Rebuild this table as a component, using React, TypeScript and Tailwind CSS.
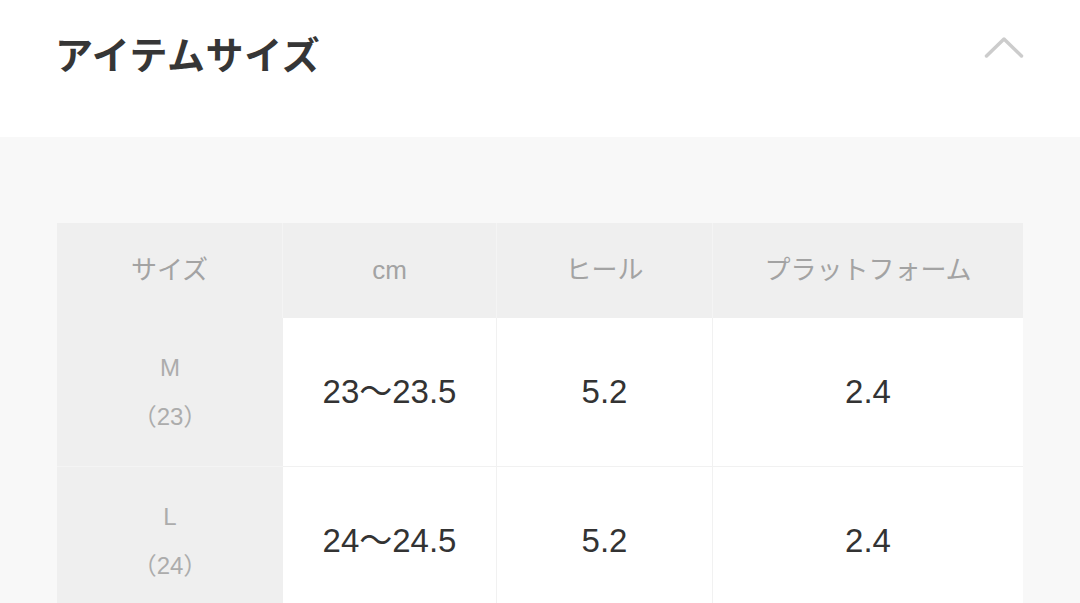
const rows = [
  { size: "M", jp: "（23）", cm: "23～23.5", heel: "5.2", platform: "2.4" },
  { size: "L", jp: "（24）", cm: "24～24.5", heel: "5.2", platform: "2.4" },
]

const headers = ["サイズ", "cm", "ヒール", "プラットフォーム"]

function ChevronUp() {
  return (
    <svg width="40" height="24" viewBox="0 0 40 24" fill="none">
      <path d="M2.5 21 L20 4 L37.5 21" stroke="#cccccc" strokeWidth="3.5" strokeLinecap="round" strokeLinejoin="round" />
    </svg>
  )
}

export default function App() {
  return (
    <div className="w-[1080px] h-[603px] overflow-hidden bg-white font-[family-name:'Liberation_Sans','Noto_Sans_CJK_JP',sans-serif]">
      <div className="h-[137px] flex justify-between pl-[55px] pr-[56px]">
        <h2 className="pt-[29px] text-[38px] leading-[47px] tracking-[0.6px] font-bold text-[#363636] font-[family-name:'Noto_Sans_CJK_JP',sans-serif]">
          アイテムサイズ
        </h2>
        <div className="pt-[35px]">
          <ChevronUp />
        </div>
      </div>
      <div className="bg-[#f8f8f8] h-[466px] px-[57px] pt-[86px]">
        <div className="grid grid-cols-[226px_214px_216px_310px]">
          {headers.map((h, i) => (
            <div
              key={h}
              className={`h-[95px] flex items-center justify-center bg-[#efefef] text-[26px] text-[#a3a3a3] ${i < 3 ? "border-r border-[#f4f4f4]" : ""}`}
            >
              {h}
            </div>
          ))}
          {rows.map((r) => (
            <>
              <div key={r.size + "s"} className="h-[149px] flex flex-col items-center justify-center bg-[#efefef] text-[24px] leading-[49px] text-[#acacac] border-b border-[#f4f4f4]">
                <span>{r.size}</span>
                <span>{r.jp}</span>
              </div>
              <div key={r.size + "c"} className="h-[149px] flex items-center justify-center bg-white text-[33px] text-[#333333] border-r border-b border-[#f1f1f1]">
                {r.cm}
              </div>
              <div key={r.size + "h"} className="h-[149px] flex items-center justify-center bg-white text-[33px] text-[#333333] border-r border-b border-[#f1f1f1]">
                {r.heel}
              </div>
              <div key={r.size + "p"} className="h-[149px] flex items-center justify-center bg-white text-[33px] text-[#333333] border-b border-[#f1f1f1]">
                {r.platform}
              </div>
            </>
          ))}
        </div>
      </div>
    </div>
  )
}
